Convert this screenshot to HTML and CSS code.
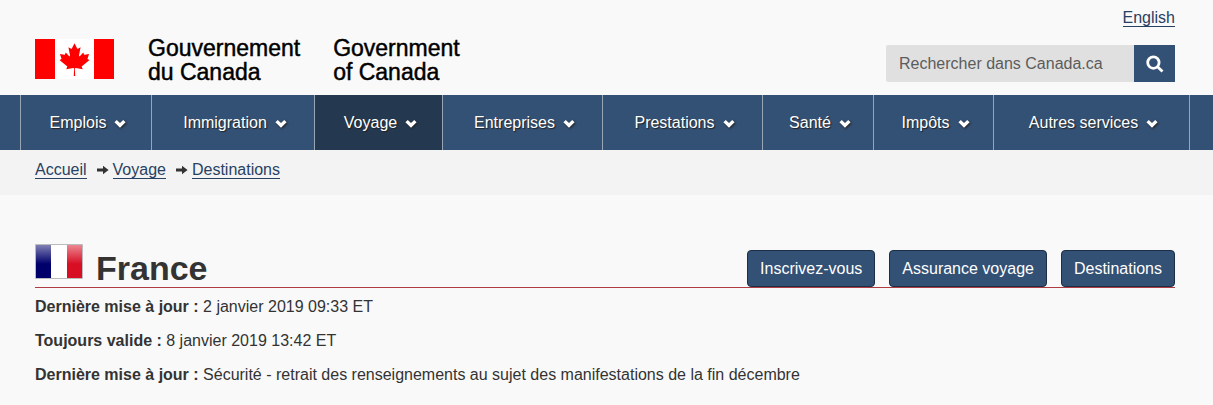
FILE: index.html
```html
<!DOCTYPE html>
<html lang="fr">
<head>
<meta charset="utf-8">
<meta name="viewport" content="width=device-width, initial-scale=1">
<title>France - Conseils aux voyageurs</title>
<link rel="stylesheet" href="styles.css">
</head>
<body>
<svg class="sprite" aria-hidden="true">
  <symbol id="chevron" viewBox="0 0 12 9"><path d="M0.4 3.3 2.8 0.9 6 3.9 9.2 0.9l2.4 2.4L6 8.8z"/></symbol>
  <symbol id="arrow" viewBox="0 0 12 10"><path d="M0 3.6h6V0.8L11.6 5 6 9.2V6.4H0z"/></symbol>
</svg>
<header>
  <div class="banner">
    <div class="brand">
      <svg class="canada-flag" viewBox="0 0 79 40" role="img" aria-label="Drapeau du Canada">
        <path fill="#fff" d="M20 0h39v40H20z"/>
        <path fill="#f00" d="M0 0h20v40H0zM59 0h20v40H59z"/>
        <path fill="#f00" transform="translate(.62 1) scale(.0081)" d="m4890 4430-45-863a95 95 0 0 1 111-98l859 151-116-320a65 65 0 0 1 20-73l941-762-212-99a65 65 0 0 1-34-79l186-572-542 115a65 65 0 0 1-73-38l-105-247-423 454a65 65 0 0 1-111-57l204-1052-327 189a65 65 0 0 1-91-27l-332-652-332 652a65 65 0 0 1-91 27l-327-189 204 1052a65 65 0 0 1-111 57l-423-454-105 247a65 65 0 0 1-73 38l-542-115 186 572a65 65 0 0 1-34 79l-212 99 941 762a65 65 0 0 1 20 73l-116 320 859-151a95 95 0 0 1 111 98l-45 863z"/>
      </svg>
      <span class="wordmark">Gouvernement<br>du Canada</span>
      <span class="wordmark" lang="en">Government<br>of Canada</span>
    </div>
    <div class="tools">
      <a class="link" href="#" lang="en">English</a>
      <form class="search" role="search">
        <input class="search-box" type="search" aria-label="Rechercher dans Canada.ca" placeholder="Rechercher dans Canada.ca">
        <button class="search-button" type="submit" aria-label="Rechercher">
          <svg class="search-icon" viewBox="0 0 18 18"><circle cx="7.4" cy="7.6" r="5.7"/><path d="m11.5 11.7 5 4.8"/></svg>
        </button>
      </form>
    </div>
  </div>
  <nav class="menu" aria-label="Menu principal">
    <div class="menu-items">
      <a class="menu-item" href="#">Emplois <svg class="chevron"><use href="#chevron"/></svg></a>
      <a class="menu-item" href="#">Immigration <svg class="chevron"><use href="#chevron"/></svg></a>
      <a class="menu-item current" href="#">Voyage <svg class="chevron"><use href="#chevron"/></svg></a>
      <a class="menu-item" href="#">Entreprises <svg class="chevron"><use href="#chevron"/></svg></a>
      <a class="menu-item" href="#">Prestations <svg class="chevron"><use href="#chevron"/></svg></a>
      <a class="menu-item" href="#">Santé <svg class="chevron"><use href="#chevron"/></svg></a>
      <a class="menu-item" href="#">Impôts <svg class="chevron"><use href="#chevron"/></svg></a>
      <a class="menu-item" href="#">Autres services <svg class="chevron"><use href="#chevron"/></svg></a>
    </div>
  </nav>
  <nav class="breadcrumb" aria-label="Fil d'Ariane">
    <a class="link" href="#">Accueil</a>
    <svg class="arrow"><use href="#arrow"/></svg>
    <a class="link" href="#">Voyage</a>
    <svg class="arrow"><use href="#arrow"/></svg>
    <a class="link" href="#">Destinations</a>
  </nav>
</header>
<main class="content">
  <div class="title-bar">
    <svg class="france-flag" viewBox="0 0 48 35" role="img" aria-label="Drapeau de la France">
      <defs>
        <linearGradient id="shine" x2="0" y2="1"><stop offset="0" stop-color="#fff" stop-opacity=".5"/><stop offset="1" stop-color="#fff" stop-opacity="0"/></linearGradient>
      </defs>
      <path fill="#fff" d="M0 0h48v35H0z"/>
      <path fill="#00006b" d="M1 1h15v33H1z"/>
      <path fill="#d80e24" d="M32 1h15v33H32z"/>
      <path fill="url(#shine)" d="M1 1h46v19H1z"/>
      <path fill="none" stroke="#bbb" d="M.5.5h47v34H.5z"/>
    </svg>
    <h1 class="title">France</h1>
    <div class="actions">
      <a class="button" href="#">Inscrivez-vous</a>
      <a class="button" href="#">Assurance voyage</a>
      <a class="button" href="#">Destinations</a>
    </div>
  </div>
  <p class="fact"><strong>Dernière mise à jour :</strong> 2 janvier 2019 09:33 ET</p>
  <p class="fact"><strong>Toujours valide :</strong> 8 janvier 2019 13:42 ET</p>
  <p class="fact"><strong>Dernière mise à jour :</strong> Sécurité - retrait des renseignements au sujet des manifestations de la fin décembre</p>
</main>
</body>
</html>
```
FILE: styles.css
```css
* { box-sizing: border-box; }

body {
  margin: 0;
  background: #f9f9f9;
  color: #333;
  font: 16px/24px "Liberation Sans", Arial, sans-serif;
}

.sprite { display: none; }

.link {
  color: #284162;
  text-decoration: none;
  line-height: 17px;
  border-bottom: 1px solid #284162;
}

.banner {
  display: flex;
  justify-content: space-between;
  padding: 9px 38px 13px 35px;
}

.brand {
  display: flex;
  height: 73px;
  padding-top: 30px;
}

.canada-flag {
  width: 79px;
  height: 40px;
  margin-right: 34px;
}

.wordmark {
  margin: -3px 33px 0 0;
  color: #000;
  font-size: 23px;
  line-height: 24px;
  white-space: nowrap;
  -webkit-text-stroke: 0.02em #000;
}

.tools {
  display: flex;
  flex-direction: column;
  align-items: flex-end;
  gap: 18px;
}

.search {
  display: flex;
  height: 37px;
}

.search-box {
  width: 248px;
  padding: 0 13px;
  border: 0;
  border-radius: 2px 0 0 2px;
  background: #e0e0e0;
  font: 16px "Liberation Sans", Arial, sans-serif;
}

.search-box::placeholder { color: #5c5c5c; }

.search-button {
  display: grid;
  place-items: center;
  width: 41px;
  padding: 0;
  border: 0;
  background: #335075;
}

.search-icon {
  width: 18px;
  height: 18px;
  fill: none;
  stroke: #fff;
  stroke-width: 2.8;
}

.menu {
  padding: 0 23px 0 20px;
  background: #335075;
}

.menu-items {
  display: grid;
  grid-template-columns: 131fr 163fr 128fr 160fr 160fr 111fr 120fr 196fr;
  border-right: 1px solid #98a5b6;
}

.menu-item {
  display: flex;
  align-items: center;
  justify-content: center;
  gap: 8px;
  height: 55px;
  padding-left: 4px;
  border-left: 1px solid #98a5b6;
  color: #fff;
  text-decoration: none;
  text-shadow: 1px 1px 1px #222;
  white-space: nowrap;
}

.current { background: #243850; }

.chevron {
  width: 12px;
  height: 9px;
  margin-top: 2px;
  fill: #fff;
  filter: drop-shadow(1px 1px 1px #222);
}

.breadcrumb {
  display: flex;
  align-items: center;
  padding: 11px 35px 16px;
  background: #f3f3f3;
}

.arrow {
  width: 12px;
  height: 10px;
  margin: 0 4px 0 10px;
  fill: #333;
}

.content { padding: 49px 38px 12px 35px; }

.title-bar {
  display: flex;
  align-items: flex-end;
  margin-bottom: 7px;
  border-bottom: 1px solid #af3c43;
}

.france-flag {
  width: 48px;
  height: 35px;
  margin-bottom: 8px;
}

.title {
  margin: 0 0 0 13px;
  font-size: 34px;
  line-height: 38px;
}

.actions {
  display: flex;
  gap: 14px;
  margin-left: auto;
}

.button {
  padding: 5px 12px;
  border: 1px solid #1c2f47;
  border-radius: 4px;
  background: #335075;
  color: #fff;
  line-height: 25px;
  text-decoration: none;
}

.fact { margin: 0 0 10px; }
```
